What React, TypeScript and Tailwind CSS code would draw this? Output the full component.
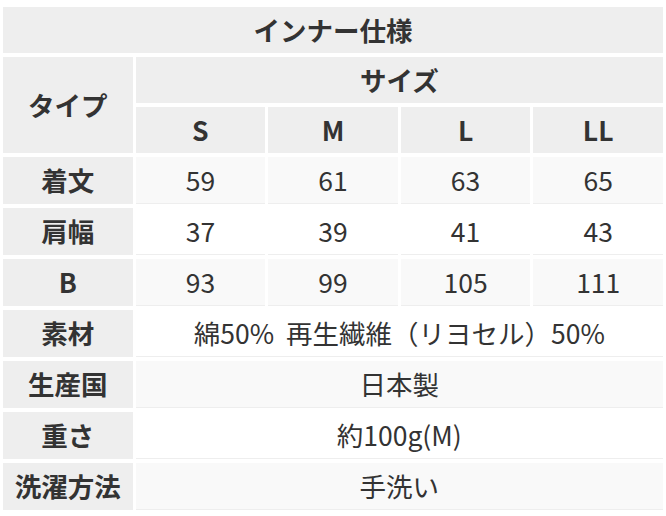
const sizes = ['S', 'M', 'L', 'LL'];

const measureRows = [
  { label: '着文', values: ['59', '61', '63', '65'] },
  { label: '肩幅', values: ['37', '39', '41', '43'] },
  { label: 'B', values: ['93', '99', '105', '111'] },
];

const infoRows = [
  { label: '素材', value: '綿50%\u00a0\u00a0再生繊維（リヨセル）50%' },
  { label: '生産国', value: '日本製' },
  { label: '重さ', value: '約100g(M)' },
  { label: '洗濯方法', value: '手洗い' },
];

const th = 'bg-[#eeeeee] font-bold text-center align-middle';
const td = 'text-center align-middle font-normal border-b border-[#eeeeee]';

export default function App() {
  return (
    <div
      className="w-[666px] h-[516px] bg-white pt-[3px] text-[#333333] text-[26.5px] leading-none overflow-hidden"
      style={{ fontFamily: '"Noto Sans CJK JP", "Noto Sans", sans-serif' }}
    >
      <table className="w-full table-fixed border-separate border-spacing-x-[3px] border-spacing-y-[4px]">
        <thead>
          <tr>
            <th colSpan={5} className={`${th} h-[46px]`}>インナー仕様</th>
          </tr>
          <tr>
            <th rowSpan={2} className={th}>タイプ</th>
            <th colSpan={4} className={`${th} h-[46px]`}>サイズ</th>
          </tr>
          <tr>
            {sizes.map((s) => (
              <th key={s} className={`${th} h-[46px]`}>{s}</th>
            ))}
          </tr>
        </thead>
        <tbody>
          {measureRows.map((row, i) => (
            <tr key={row.label}>
              <th className={`${th} h-[47px] border-b border-[#eeeeee]`}>{row.label}</th>
              {row.values.map((v, j) => (
                <td key={j} className={`${td} ${i % 2 === 0 ? 'bg-[#f9f9f9]' : 'bg-white'}`}>{v}</td>
              ))}
            </tr>
          ))}
          {infoRows.map((row, i) => (
            <tr key={row.label}>
              <th className={`${th} h-[47px] border-b border-[#eeeeee]`}>{row.label}</th>
              <td colSpan={4} className={`${td} ${i % 2 === 0 ? 'bg-white' : 'bg-[#f9f9f9]'}`}>{row.value}</td>
            </tr>
          ))}
        </tbody>
      </table>
    </div>
  );
}
